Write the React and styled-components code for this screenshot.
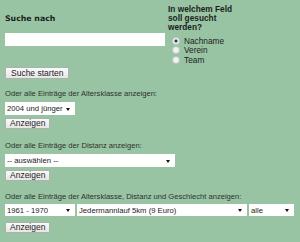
import React from "react";
import styled, { createGlobalStyle } from "styled-components";

const Global = createGlobalStyle`
  html, body { margin: 0; padding: 0; background: #99c4a4; }
  body { font-family: "Liberation Sans", Arial, sans-serif; color: #1f2a20; }
`;

const Page = styled.div`
  width: 300px;
  height: 242px;
  padding: 0 5px;
  box-sizing: border-box;
  overflow: hidden;
`;

const Top = styled.div`
  display: grid;
  grid-template-columns: 163px 1fr;
  align-items: start;
`;

const LeftCol = styled.div`
  display: flex;
  flex-direction: column;
  align-items: flex-start;
  padding-top: 13px;
`;

const Heading = styled.div`
  font-family: "DejaVu Sans", Verdana, sans-serif;
  font-weight: bold;
  font-size: 7.8px;
  line-height: 11px;
  color: #1a221b;
`;

const SearchInput = styled.input`
  width: 160px;
  height: 13px;
  margin-top: 9px;
  border: none;
  padding: 0;
  background: #fff;
  box-sizing: border-box;
  outline: none;
`;

const Button = styled.button`
  font-family: "Liberation Sans", Arial, sans-serif;
  font-size: 8.5px;
  color: #222;
  height: ${p => p.$h || 11}px;
  padding: 0 ${p => p.$px || 4}px;
  margin-top: ${p => p.$mt || 0}px;
  border: 1px solid #a9b3ab;
  border-radius: 1px;
  background: linear-gradient(#fafafa, #e6e6e6);
  line-height: 1;
  cursor: pointer;
  display: inline-flex;
  align-items: center;
`;

const RightCol = styled.div`
  padding-top: 5px;
`;

const FieldLabel = styled.div`
  font-family: "Liberation Sans", Arial, sans-serif;
  font-weight: bold;
  font-size: 8.3px;
  line-height: 9px;
  white-space: nowrap;
  color: #1a221b;
`;

const RadioList = styled.div`
  display: flex;
  flex-direction: column;
  margin-top: 4px;
  padding-left: 4px;
`;

const RadioRow = styled.label`
  display: flex;
  align-items: center;
  gap: 4px;
  height: 9.6px;
  font-size: 8.3px;
  color: #222;
`;

const Radio = styled.span`
  width: 6px;
  height: 6px;
  border-radius: 50%;
  border: 1px solid #c4ccc6;
  background: radial-gradient(circle, ${p => (p.$on ? "#2a3a6a 0 1.3px, #f4f4f4 1.8px" : "#f4f4f4 0, #e8e8e8 100%")});
`;

const Section = styled.div`
  margin-top: ${p => p.$mt}px;
  display: flex;
  flex-direction: column;
  align-items: flex-start;
`;

const Caption = styled.div`
  font-size: 7.6px;
  line-height: 10px;
  color: #2a332b;
  white-space: nowrap;
`;

const SelectRow = styled.div`
  display: flex;
  gap: 2px;
  margin-top: ${p => p.$mt || 3}px;
`;

const SelectBox = styled.div`
  position: relative;
  width: ${p => p.$w}px;
  height: ${p => p.$h || 13}px;
  background: #fff;
  display: flex;
  align-items: center;
  padding-left: 2px;
  box-sizing: border-box;
  font-size: 7.7px;
  color: #222;
  white-space: nowrap;
  overflow: hidden;
`;

const Arrow = styled.span`
  position: absolute;
  right: 5px;
  top: 50%;
  margin-top: -1px;
  width: 0;
  height: 0;
  border-left: 2.5px solid transparent;
  border-right: 2.5px solid transparent;
  border-top: 3px solid #111;
`;

const Select = ({ w, h, children }) => (
  <SelectBox $w={w} $h={h}>
    {children}
    <Arrow />
  </SelectBox>
);

export default function App() {
  return (
    <Page>
      <Global />
      <Top>
        <LeftCol>
          <Heading>Suche nach</Heading>
          <SearchInput type="text" />
          <Button $mt={21} $h={12} $px={5}>Suche starten</Button>
        </LeftCol>
        <RightCol>
          <FieldLabel>
            In welchem Feld
            <br />
            soll gesucht
            <br />
            werden?
          </FieldLabel>
          <RadioList>
            <RadioRow><Radio $on />Nachname</RadioRow>
            <RadioRow><Radio />Verein</RadioRow>
            <RadioRow><Radio />Team</RadioRow>
          </RadioList>
        </RightCol>
      </Top>

      <Section $mt={10}>
        <Caption>Oder alle Einträge der Altersklasse anzeigen:</Caption>
        <SelectRow>
          <Select w={70}>2004 und jünger</Select>
        </SelectRow>
        <Button $mt={3}>Anzeigen</Button>
      </Section>

      <Section $mt={12}>
        <Caption>Oder alle Einträge der Distanz anzeigen:</Caption>
        <SelectRow>
          <Select w={170}>-- auswählen --</Select>
        </SelectRow>
        <Button $mt={3}>Anzeigen</Button>
      </Section>

      <Section $mt={11}>
        <Caption>Oder alle Einträge der Altersklasse, Distanz und Geschlecht anzeigen:</Caption>
        <SelectRow $mt={2}>
          <Select w={70} h={12}>1961 - 1970</Select>
          <Select w={170} h={12}>Jedermannlauf 5km (9 Euro)</Select>
          <Select w={45} h={12}>alle</Select>
        </SelectRow>
        <Button $mt={6}>Anzeigen</Button>
      </Section>
    </Page>
  );
}
